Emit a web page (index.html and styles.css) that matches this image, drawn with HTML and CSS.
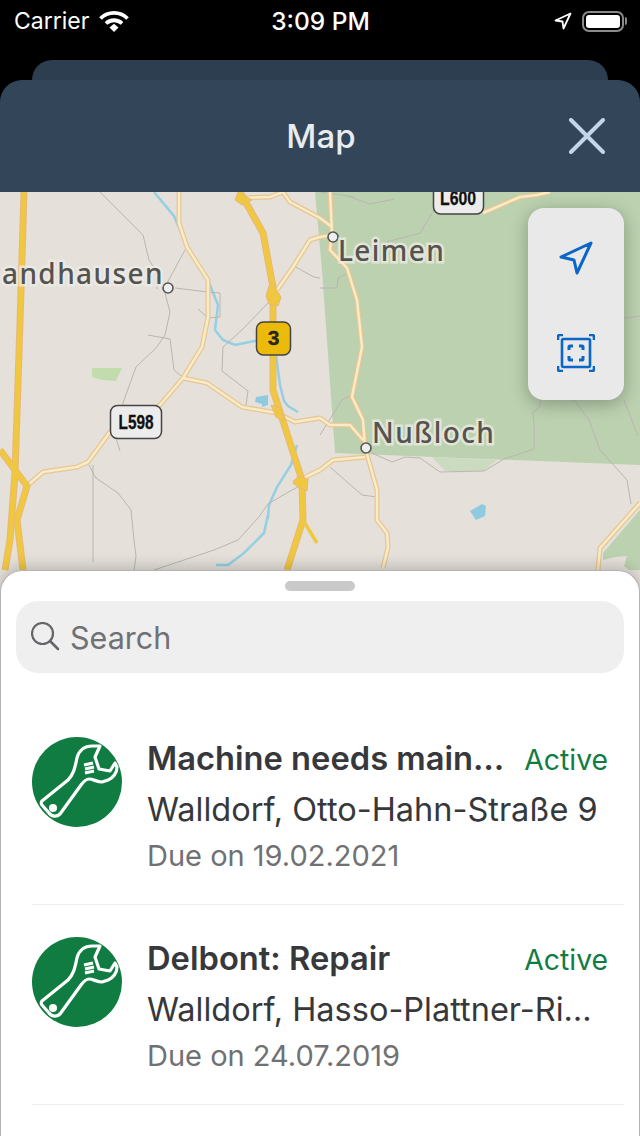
FILE: index.html
```html
<!DOCTYPE html>
<html lang="en">
<head>
<meta charset="UTF-8" />
<meta name="viewport" content="width=device-width, initial-scale=1" />
<title>Map</title>
<link rel="stylesheet" href="styles.css">
</head>
<body>

<div class="status-bar">
  <div class="status-left">
    <span>Carrier</span>
    <svg class="wifi" width="30" height="22" viewBox="0 0 30 22">
      <path d="M1.500 8.500a19 19 0 0 1 27 0" fill="none" stroke="#fff" stroke-width="3.800" />
      <path d="M7 13.500a11.500 11.500 0 0 1 16 0" fill="none" stroke="#fff" stroke-width="3.800" />
      <path d="M10.500 17.500l4.500-3.800 4.500 3.800-4.500 4.500z" fill="#fff" />
    </svg>
  </div>
  <div class="status-time">3:09 PM</div>
  <div class="status-right">
    <svg width="18" height="18" viewBox="0 0 18 18">
      <path d="M16.500 1.500L1.500 8.500l7 1 1 7z" fill="none" stroke="#fff" stroke-width="1.800" stroke-linejoin="round" />
    </svg>
    <div class="battery"><div class="battery-fill"></div></div>
    <div class="battery-tip"></div>
  </div>
</div>

<div class="back-card"></div>
<div class="header">
  <div></div>
  <h1>Map</h1>
  <button class="close" aria-label="Close">
    <svg width="38" height="36" viewBox="0 0 38 36">
      <path d="M3 2l32 32M35 2L3 34" stroke="#c3d6e8" stroke-width="4" stroke-linecap="round" />
    </svg>
  </button>
</div>

<div class="map">
  <svg class="map-canvas" width="640" height="402" viewBox="0 192 640 402">
    <rect x="0" y="192" width="640" height="402" fill="#e5e0da" />

    <!-- Wald -->
    <path d="M315 192L322 270 335 453 640 465V192z" fill="#bbd1af" />
    <path d="M432 457l13 14h38l14-11z" fill="#cbdbbf" />
    <path d="M603 570v-17l37-43v60z" fill="#bbd1af" />
    <path d="M603 560l12-3 12-1-3 10 10 8h-31z" fill="#e5e0da" />
    <path d="M92 368h30l-6 13-14-1-10-3z" fill="#c2dcae" />

    <!-- Wasser -->
    <g fill="none" stroke="#94cfe3" stroke-width="2.500">
      <path d="M154 192l20 24 12 28 22 36 10 25-3 25 8 10 12 5 34-7" />
      <path d="M276 355l4 30 4 16 4 5 10 6" />
      <path d="M297 445l-6 20-14 22-8 18-1 14" />
      <path d="M268 515l-4 18-20 20-16 12h-12" />
    </g>
    <path d="M256 397l12-2 0 10-6 2 0-3-7-2z" fill="#8fcbe0" />
    <path d="M470 511l12-7 4 2-1 10-9 4z" fill="#8fcbe0" />

    <!-- Feldwege -->
    <g fill="none" stroke="#b9b6b0" stroke-width="1">
      <path d="M100 192l27 27 16 16 6 25 7 11 1 18" />
      <path d="M185 250l-19 35-1 8 5 19-5 23-9 13-20 19-12 33-9 30 1 8 4 13" />
      <path d="M175 288l33 4 12 1 0 24-12 1-10-9" />
      <path d="M148 335l22 4 4 31 12 10" />
      <path d="M292 265l22 12 6 1" />
      <path d="M269 302l-26 27-20 18-1 24 26 20-2 14" />
      <path d="M89 465l4 8 3 5 22 15 13 17 3 30 2 16-2 15" />
      <path d="M93 465v97" />
      <path d="M154 570l60-20 24-10 20-22 10-14 24-14 10-5" />
      <path d="M320 192l35 5M345 195l25 9 25-5" />
      <path d="M375 245l45-12 20-33" />
      <path d="M320 288h17l1-10 8-4" />
      <path d="M320 435l22-35 10-5" />
      <path d="M330 467l32 28 15 2" />
      <path d="M372 453l20 9 13-5 15 1 20 14 44-1 20-12 30-10v-25l-1-12 7-5 1-21 8 3 26 12 14 19 11 30 27 30 4 24" />
      <path d="M624 318l16-2M624 400l14 36" />
    </g>

    <!-- Landstrassen -->
    <g class="road-casing">
      <path d="M179 192v31l8 24 21 33v37l-6 30-19 31-23 27-50 27-22 30-11 5-34 5-15 13" />
      <path d="M183 378l24 5 35 24 35 6 18 9 25-4 10 7h20l13 15" />
      <path d="M240 198l30-1 13-5 7 10 30 16 12 9" />
      <path d="M277 290l16-23 17-27 10-3 12-2" />
      <path d="M330 192l2 41-2 17 17 18 10 32 5 47-10 50 11 23 2 27 12 43v30l10 13 1 14-5 21" />
      <path d="M293 483l27-13 13-10 32-3" />
      <path d="M483 213l37-16 17-2 13-3" />
      <path d="M640 503l-40 45-2 22" />
    </g>
    <g class="road-fill">
      <path d="M179 192v31l8 24 21 33v37l-6 30-19 31-23 27-50 27-22 30-11 5-34 5-15 13" />
      <path d="M183 378l24 5 35 24 35 6 18 9 25-4 10 7h20l13 15" />
      <path d="M240 198l30-1 13-5 7 10 30 16 12 9" />
      <path d="M277 290l16-23 17-27 10-3 12-2" />
      <path d="M330 192l2 41-2 17 17 18 10 32 5 47-10 50 11 23 2 27 12 43v30l10 13 1 14-5 21" />
      <path d="M293 483l27-13 13-10 32-3" />
      <path d="M483 213l37-16 17-2 13-3" />
      <path d="M640 503l-40 45-2 22" />
    </g>

    <!-- Autobahn -->
    <g class="highway-casing">
      <path d="M24 192l-4 131-5 150-5 67-5 30" />
      <path d="M0 450l27 36-10 34 6 50" />
      <path d="M240 192l23 41 10 54v103l29 90 1 40-16 50" />
    </g>
    <g class="highway-fill">
      <path d="M24 192l-4 131-5 150-5 67-5 30" />
      <path d="M0 450l27 36-10 34 6 50" />
      <path d="M240 192l23 41 10 54v103l29 90 1 40-16 50" />
    </g>
    <path d="M303 520l14 23" fill="none" stroke="#efc83f" stroke-width="3.500" />
    <path d="M235 200l3-8 14 8-10 5zM266 296l3-10 3-3 9 14-3 9-9-2zM293 483l5-7 10 3-1 12-9-4zM271 405l10 3 3 14-8-5z" fill="#efc83f" stroke="#e8b77c" />

    <!-- Orte -->
    <circle cx="168" cy="288" r="5" fill="#eee" stroke="#555" stroke-width="1.600" />
    <circle cx="333" cy="237" r="5" fill="#eee" stroke="#555" stroke-width="1.600" />
    <circle cx="366" cy="448" r="5" fill="#eee" stroke="#555" stroke-width="1.600" />
    <text class="place" x="2" y="284">andhausen</text>
    <text class="place" x="338" y="261">Leimen</text>
    <text class="place" x="372" y="443">Nußloch</text>

    <!-- Strassenschilder -->
    <rect class="shield" x="110.500" y="405.500" width="51" height="33" rx="7" />
    <text class="shield-text" x="136" y="429" textLength="35" lengthAdjust="spacingAndGlyphs">L598</text>
    <rect class="shield" x="433.500" y="181" width="50" height="33" rx="7" />
    <text class="shield-text" x="458" y="205" textLength="36" lengthAdjust="spacingAndGlyphs">L600</text>
    <rect class="shield shield-yellow" x="256.500" y="322" width="34" height="33" rx="7" />
    <text class="shield-text shield-number" x="273.500" y="345">3</text>
  </svg>

  <div class="map-tools">
    <button class="tool" aria-label="Locate">
      <svg width="34" height="34" viewBox="0 0 34 34">
        <path d="M32 2L2 16l13 3 3 13z" fill="none" stroke="#0a66c8" stroke-width="3" stroke-linejoin="round" />
      </svg>
    </button>
    <button class="tool tool-fit" aria-label="Fit">
      <svg width="38" height="38" viewBox="0 0 38 38">
        <rect x="5" y="5" width="28" height="28" rx="1.500" fill="none" stroke="#0a66c8" stroke-width="2.600" />
        <path d="M1 6V3a2 2 0 0 1 2-2h3M32 1h3a2 2 0 0 1 2 2v3M37 32v3a2 2 0 0 1-2 2h-3M6 37H3a2 2 0 0 1-2-2v-3" fill="none" stroke="#0a66c8" stroke-width="2.600" />
        <path d="M12 16v-3a1 1 0 0 1 1-1h3M22 12h3a1 1 0 0 1 1 1v3M26 22v3a1 1 0 0 1-1 1h-3M16 26h-3a1 1 0 0 1-1-1v-3" fill="none" stroke="#0a66c8" stroke-width="3" />
      </svg>
    </button>
  </div>
</div>

<div class="sheet">
  <div class="handle"></div>
  <div class="search">
    <svg width="30" height="30" viewBox="0 0 30 30">
      <circle cx="11.500" cy="11.500" r="10.500" fill="none" stroke="#636568" stroke-width="2.200" />
      <path d="M19 19l8 8" stroke="#636568" stroke-width="2.600" stroke-linecap="round" />
    </svg>
    <span>Search</span>
  </div>

  <div class="order">
    <svg class="order-icon" width="90" height="90" viewBox="0 0 90 90">
      <circle cx="45" cy="45" r="45" fill="#117c41" />
      <path class="wrench" d="M10 64L36 43c6-6 7-13 9-22 2-8 8-12 15-12h8l-5 11 4 12 11 2 5-8 2 4c0 6-4 11-9 13l-6 2c-5 0-9-3-13-3-3 0-5 2-8 6L28 77c-3 3-8 3-11-1l-7-8c-1-1-1-3 0-4z" />
      <circle class="wrench-eye" cx="21" cy="71" r="4" />
      <path class="wrench" d="M52 28l9-2M53 32l9-2M53 36l9-2" />
    </svg>
    <div class="order-text">
      <div class="order-top">
        <div class="order-title">Machine needs maintenance</div>
        <div class="order-state">Active</div>
      </div>
      <div class="order-address">Walldorf, Otto-Hahn-Straße 9</div>
      <div class="order-due">Due on 19.02.2021</div>
    </div>
  </div>

  <div class="order">
    <svg class="order-icon" width="90" height="90" viewBox="0 0 90 90">
      <circle cx="45" cy="45" r="45" fill="#117c41" />
      <path class="wrench" d="M10 64L36 43c6-6 7-13 9-22 2-8 8-12 15-12h8l-5 11 4 12 11 2 5-8 2 4c0 6-4 11-9 13l-6 2c-5 0-9-3-13-3-3 0-5 2-8 6L28 77c-3 3-8 3-11-1l-7-8c-1-1-1-3 0-4z" />
      <circle class="wrench-eye" cx="21" cy="71" r="4" />
      <path class="wrench" d="M52 28l9-2M53 32l9-2M53 36l9-2" />
    </svg>
    <div class="order-text">
      <div class="order-top">
        <div class="order-title">Delbont: Repair</div>
        <div class="order-state">Active</div>
      </div>
      <div class="order-address">Walldorf, Hasso-Plattner-Ring 7</div>
      <div class="order-due">Due on 24.07.2019</div>
    </div>
  </div>
</div>

</body>
</html>
```

FILE: styles.css
```css
:root {
  --header-bg: #324559;
  --back-card-bg: #2c3e4f;
  --text-dark: #36383b;
  --text-muted: #6f7174;
  --green: #117c41;
}
* {
  box-sizing: border-box;
}
html, body {
  height: 100%;
}
body {
  margin: 0;
  background-color: #000;
  font-family: Inter, "Noto Sans", sans-serif;
  display: flex;
  flex-direction: column;
  overflow: hidden;
}
button {
  background: none;
  border: none;
  padding: 0;
  display: flex;
}

.status-bar {
  height: 60px;
  flex: none;
  padding: 0 13px 18px 14px;
  display: grid;
  grid-template-columns: 1fr auto 1fr;
  align-items: center;
  color: #fff;
  font-size: 23px;
}
.status-left {
  display: flex;
  align-items: center;
  gap: 10px;
}
.status-time {
  font-weight: 500;
  font-size: 24.500px;
}
.status-right {
  display: flex;
  justify-content: flex-end;
  align-items: center;
}
.status-right svg {
  margin-right: 10px;
}
.battery {
  width: 42px;
  height: 21px;
  border: 2px solid #8a8a8a;
  border-radius: 7px;
  padding: 2px;
}
.battery-fill {
  height: 100%;
  background-color: #fff;
  border-radius: 3px;
}
.battery-tip {
  width: 2px;
  height: 8px;
  margin-left: 1px;
  background-color: #8a8a8a;
  border-radius: 0 2px 2px 0;
}

.back-card {
  height: 40px;
  flex: none;
  margin: 0 32px -20px;
  background-color: var(--back-card-bg);
  border-radius: 20px 20px 0 0;
}
.header {
  height: 112px;
  flex: none;
  position: relative;
  padding-right: 34px;
  display: grid;
  grid-template-columns: 1fr auto 1fr;
  align-items: center;
  background-color: var(--header-bg);
  border-radius: 22px 22px 0 0;
}
.header h1 {
  margin: 0;
  color: #e8ecef;
  font-size: 33px;
  font-weight: 500;
  position: relative;
  left: 18px;
}
.close {
  justify-self: end;
}

.map {
  height: 402px;
  flex: none;
  position: relative;
  overflow: hidden;
}
.map-canvas {
  display: block;
}
.road-casing path {
  fill: none;
  stroke: #e9c594;
  stroke-width: 5;
  stroke-linejoin: round;
}
.road-fill path {
  fill: none;
  stroke: #f6ecc6;
  stroke-width: 2.500;
  stroke-linejoin: round;
}
.highway-casing path {
  fill: none;
  stroke: #e8b77c;
  stroke-width: 7;
  stroke-linejoin: round;
}
.highway-fill path {
  fill: none;
  stroke: #efc83f;
  stroke-width: 5;
  stroke-linejoin: round;
}
.place {
  font-family: "Noto Sans", sans-serif;
  font-size: 28px;
  font-weight: 500;
  letter-spacing: 1.400px;
  fill: #55534f;
  stroke: rgba(238, 236, 230, 0.75);
  stroke-width: 5px;
  paint-order: stroke;
}
.shield {
  fill: #ececec;
  stroke: #444;
  stroke-width: 1.500;
}
.shield-yellow {
  fill: #ebba0a;
}
.shield-text {
  font-family: "Liberation Sans", sans-serif;
  font-size: 20px;
  font-weight: 700;
  text-anchor: middle;
  fill: #111;
  stroke: #111;
  stroke-width: 0.300px;
}
.shield-number {
  font-size: 21px;
  fill: #2c2a20;
}
.map-tools {
  position: absolute;
  top: 16px;
  right: 16px;
  width: 96px;
  height: 192px;
  padding-top: 3px;
  display: flex;
  flex-direction: column;
  background-color: #e9e9e9;
  border-radius: 16px;
  box-shadow: 0 4px 18px rgba(0, 0, 0, 0.28);
}
.tool {
  flex: 1;
  align-items: center;
  justify-content: center;
}
.tool-fit {
  padding-top: 2px;
}

.sheet {
  flex: 1;
  position: relative;
  margin-top: -24px;
  padding: 10px 15px 0;
  background-color: #fff;
  border: 1px solid #b4b4b4;
  border-bottom: none;
  border-radius: 22px 22px 0 0;
  box-shadow: 0 -4px 14px rgba(0, 0, 0, 0.18);
  display: flex;
  flex-direction: column;
}
.handle {
  width: 70px;
  height: 10px;
  flex: none;
  align-self: center;
  background-color: #c9c9c9;
  border-radius: 5px;
}
.search {
  height: 72px;
  flex: none;
  margin-top: 10px;
  padding-left: 15px;
  display: flex;
  align-items: center;
  gap: 9px;
  background-color: #efefef;
  border-radius: 22px;
  color: var(--text-muted);
  font-size: 30.500px;
}

.order {
  height: 200px;
  flex: none;
  margin: 0 0 0 16px;
  padding: 32px 16px 0 0;
  display: flex;
  gap: 25px;
  border-bottom: 1px solid #efefef;
}
.search + .order {
  margin-top: 32px;
}
.order-icon {
  flex: none;
}
.wrench {
  fill: none;
  stroke: #fff;
  stroke-width: 3.200;
  stroke-linejoin: round;
}
.wrench-eye {
  fill: #fff;
}
.order-text {
  flex: 1;
  min-width: 0;
  display: flex;
  flex-direction: column;
}
.order-top {
  display: flex;
  align-items: center;
  gap: 18px;
  height: 44px;
}
.order-title {
  flex: 1;
  min-width: 0;
  margin-bottom: 3px;
  color: var(--text-dark);
  font-size: 32.700px;
  font-weight: 600;
  white-space: nowrap;
  overflow: hidden;
  text-overflow: ellipsis;
}
.order-state {
  flex: none;
  margin-top: 1px;
  color: var(--green);
  font-size: 28.300px;
}
.order-address {
  margin-top: 8px;
  color: var(--text-dark);
  font-size: 32.500px;
  line-height: 42px;
  white-space: nowrap;
  overflow: hidden;
  text-overflow: ellipsis;
}
.order-due {
  margin-top: 7px;
  color: var(--text-muted);
  font-size: 29px;
  line-height: 36px;
}
```
